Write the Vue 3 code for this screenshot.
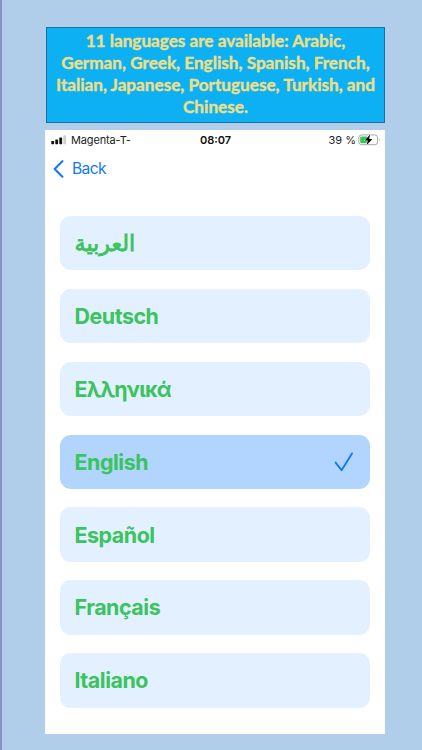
<template>
    <div class="page">
        <div class="banner">
            <div v-for="line in bannerLines" :key="line">{{ line }}</div>
        </div>

        <div class="phone">
            <div class="status-bar">
                <div class="carrier">
                    <svg class="signal" width="16" height="10" viewBox="0 0 16 10">
                        <rect x="0.3" y="6" width="2.8" height="3.2" rx="0.6" fill="#111" />
                        <rect x="4.3" y="4.6" width="2.8" height="4.6" rx="0.6" fill="#111" />
                        <rect x="8.3" y="2.6" width="2.8" height="6.6" rx="0.6" fill="#111" />
                        <rect x="12.3" y="0.2" width="2.8" height="9" rx="0.6" fill="#cfcfcf" />
                    </svg>
                    <span class="carrier-name">Magenta-T-</span>
                </div>
                <div class="time">08:07</div>
                <div class="battery">
                    <span>39 %</span>
                    <svg width="23" height="12" viewBox="0 0 23 12">
                        <rect x="0.8" y="0.9" width="18.8" height="9.8" rx="2.8" fill="#fff" stroke="#a6a6a6" />
                        <rect x="2.2" y="2.4" width="7" height="6.8" rx="1.2" fill="#34c759" />
                        <path d="M21 4.2 Q22.4 5.8 21 7.4 Z" fill="#a6a6a6" />
                        <path d="M12.2 0.4 L6.6 6.6 H9.8 L8.6 11.3 L14.4 5.1 H11.1 Z" fill="#000" stroke="#fff" stroke-width="0.9" paint-order="stroke" />
                    </svg>
                </div>
            </div>

            <div class="nav">
                <svg width="11" height="18" viewBox="0 0 11 18">
                    <path d="M9.4 1.2 L1.6 9 L9.4 16.8" fill="none" stroke="#1479f5" stroke-width="2.1" stroke-linecap="round" stroke-linejoin="round" />
                </svg>
                <span>Back</span>
            </div>

            <div class="list">
                <div
                    v-for="lang in languages"
                    :key="lang.code"
                    class="item"
                    :class="[lang.code, { selected: lang.code === selected }]"
                    @click="selected = lang.code"
                >
                    <span class="name">{{ lang.name }}</span>
                    <svg v-if="lang.code === selected" width="20" height="20" viewBox="0 0 20 20">
                        <path d="M1.6 10.6 L7.6 18.2 L18 1.4" fill="none" stroke="#1479f5" stroke-width="1.9" stroke-linecap="round" stroke-linejoin="round" />
                    </svg>
                </div>
            </div>
        </div>
    </div>
</template>

<script setup>
import { ref } from 'vue'

const bannerLines = [
    '11 languages are available: Arabic,',
    'German, Greek, English, Spanish, French,',
    'Italian, Japanese, Portuguese, Turkish, and',
    'Chinese.'
]

const languages = [
    { code: 'ar', name: 'العربية' },
    { code: 'de', name: 'Deutsch' },
    { code: 'el', name: 'Ελληνικά' },
    { code: 'en', name: 'English' },
    { code: 'es', name: 'Español' },
    { code: 'fr', name: 'Français' },
    { code: 'it', name: 'Italiano' }
]

const selected = ref('en')
</script>

<style>
    body {
        margin: 0;
        background-color: #b0cde9;
    }
</style>

<style scoped>
    .page {
        box-sizing: border-box;
        width: 422px;
        height: 750px;
        padding: 27px 37px 0 43px;
        border-left: 2px solid #8295c0;
        background-color: #b0cde9;
        font-family: Inter, "Liberation Sans", sans-serif;
        overflow: hidden;
    }
    .banner {
        box-sizing: border-box;
        width: 339px;
        height: 96px;
        margin-left: 1px;
        padding-top: 1.5px;
        border: 1px solid #20709f;
        background-color: #0db0f2;
        color: #ecdf87;
        font-family: Lato, "Open Sans", sans-serif;
        font-size: 17.2px;
        font-weight: 700;
        letter-spacing: -0.02px;
        line-height: 22.2px;
        text-align: center;
        white-space: nowrap;
        -webkit-text-stroke: 0.4px #ecdf87;
    }
    .phone {
        box-sizing: border-box;
        width: 340px;
        height: 603.5px;
        margin-top: 7px;
        background-color: #fff;
    }
    .status-bar {
        display: grid;
        grid-template-columns: 1fr auto 1fr;
        align-items: center;
        height: 20px;
        padding: 0 5px 0 6px;
        font-size: 11px;
        color: #222;
    }
    .carrier {
        display: flex;
        align-items: center;
        gap: 4px;
    }
    .carrier-name {
        letter-spacing: -0.15px;
    }
    .time {
        font-weight: 600;
        color: #111;
    }
    .battery {
        display: flex;
        align-items: center;
        justify-content: flex-end;
        gap: 2px;
        margin-right: -1px;
    }
    .nav {
        display: flex;
        align-items: center;
        gap: 8px;
        height: 37px;
        padding-left: 8px;
        color: #1479f5;
        font-size: 15.6px;
        letter-spacing: -0.6px;
    }
    .list {
        display: flex;
        flex-direction: column;
        gap: 18.4px;
        padding: 28.9px 15px 0;
    }
    .item {
        box-sizing: border-box;
        display: flex;
        align-items: center;
        justify-content: space-between;
        height: 54.5px;
        padding: 0 16px 0 14.5px;
        border-radius: 11px;
        background-color: #e3f0ff;
        color: #3bc35d;
        font-size: 21.4px;
        font-weight: 700;
        letter-spacing: -0.45px;
        line-height: 28.4px;
    }
    .selected {
        background-color: #b2d5ff;
    }
    .ar .name {
        font-family: "DejaVu Sans", sans-serif;
        font-size: 22.2px;
        font-weight: 400;
        letter-spacing: 0;
        -webkit-text-stroke: 0.8px #3bc35d;
    }
    .el .name {
        letter-spacing: -0.8px;
    }
</style>
